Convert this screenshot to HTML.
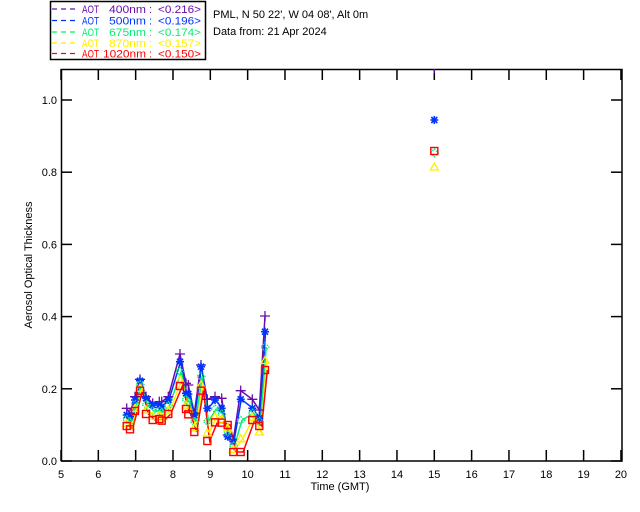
<!DOCTYPE html>
<html><head><meta charset="utf-8"><style>
html,body{margin:0;padding:0;background:#fff;}
svg{display:block;}
text{font-family:"Liberation Sans",sans-serif;font-size:11px;}
</style></head><body>
<svg id="s" width="640" height="512" xmlns="http://www.w3.org/2000/svg">
<rect width="640" height="512" fill="#fff"/>
<rect x="50.5" y="1.5" width="155" height="58" fill="none" stroke="#000" stroke-width="1.5"/>
<g id="leg" font-size="11"></g>
<g font-size="11">
<text x="213" y="18" fill="#000">PML, N 50 22', W 04 08', Alt 0m</text>
<text x="213" y="35" fill="#000">Data from: 21 Apr 2024</text>
</g>
<rect x="61.5" y="69.5" width="560.5" height="391.5" fill="none" stroke="#000" stroke-width="1.5"/>
<g id="ax" stroke="#000" stroke-width="1.5"></g>
<g id="lab" font-size="11" fill="#000"></g>
<text x="340" y="490" text-anchor="middle" font-size="11">Time (GMT)</text>
<text transform="translate(32,265) rotate(-90)" text-anchor="middle" font-size="10.5">Aerosol Optical Thickness</text>
<g id="d"></g>
</svg>
<script>
var NS="http://www.w3.org/2000/svg";
function el(p,t,a){var e=document.createElementNS(NS,t);for(var k in a)e.setAttribute(k,a[k]);p.appendChild(e);return e;}
var ax=document.getElementById('ax'),lab=document.getElementById('lab'),d=document.getElementById('d'),leg=document.getElementById('leg');
var L=[['#6a0dad','400nm','0.216'],['#0033ff','500nm','0.196'],['#00ee77','675nm','0.174'],['#ffee00','870nm','0.157'],['#ff0000','1020nm','0.150']];
var LY=[9,20.5,32,43,53.5];
L.forEach(function(l,i){var y=LY[i];
 el(leg,'path',{d:'M52 '+y+'h5M61 '+y+'h5M70 '+y+'h5',stroke:l[0],'stroke-width':1.2});
 var t=el(leg,'text',{x:82,y:y+4,fill:l[0],textLength:17,lengthAdjust:'spacingAndGlyphs'});t.textContent='AOT';
 var w=l[1].length==6?43:37;
 t=el(leg,'text',{x:146-w,y:y+4,fill:l[0],textLength:w,lengthAdjust:'spacingAndGlyphs'});t.textContent=l[1];
 t=el(leg,'text',{x:149,y:y+4,fill:l[0]});t.textContent=':';
 t=el(leg,'text',{x:158,y:y+4,fill:l[0],textLength:43,lengthAdjust:'spacingAndGlyphs'});t.textContent='<'+l[2]+'>';
});
function X(h){return 61+(h-5)*37.33;}
function Y(v){return 461-v*361;}
for(var h=5;h<=20;h++){var x=X(h);
 el(ax,'line',{x1:x,y1:461,x2:x,y2:450});el(ax,'line',{x1:x,y1:69,x2:x,y2:80});
 var t=el(lab,'text',{x:x,y:478,'text-anchor':'middle'});t.textContent=h;}
for(var i=0;i<=5;i++){var y=Y(i*0.2);
 el(ax,'line',{x1:61,y1:y,x2:72,y2:y});el(ax,'line',{x1:622,y1:y,x2:611,y2:y});
 var t=el(lab,'text',{x:57,y:y+4,'text-anchor':'end'});t.textContent=(i*0.2).toFixed(1);}
var xs=[126.7,130,135,140,146,152.7,159.3,161.7,168.3,180,186,188.3,194.3,201,207.3,215,221.7,227.7,233.3,240.7,252.3,259.3,265];
var R=[378,388,333,272,342,360,357,362,342,258,327,343,396,272,423,367,368,375,456,456,360,378,210];
var B=[345,350,300,242,295,315,315,320,300,185,280,282,345,200,325,300,325,410,425,298,325,355,95];
var P=[325,340,290,238,290,310,305,305,290,162,250,255,340,195,298,290,295,405,420,272,298,330,48];
function ys(a){return a.map(function(z){return 300+z/3;});}
var yr=ys(R),yb=ys(B),yp=ys(P);
var yg=yb.map(function(v,i){return v+0.4*(yr[i]-v);});
var yy=yb.map(function(v,i){return v+0.75*(yr[i]-v);});
yy[21]=yr[21]+6;
var series=[[yp,'#6a0dad','plus'],[yb,'#0033ff','star'],[yg,'#00ee77','dia'],[yy,'#ffee00','tri'],[yr,'#ff0000','sq']];
function mark(t,x,y,c){
 if(t=='plus'){el(d,'path',{d:'M'+(x-5)+' '+y+'h10M'+x+' '+(y-5)+'v10',stroke:c,'stroke-width':1.3,fill:'none'});}
 else if(t=='star'){el(d,'path',{d:'M'+(x-4)+' '+y+'h8M'+x+' '+(y-4)+'v8M'+(x-3)+' '+(y-3)+'l6 6M'+(x+3)+' '+(y-3)+'l-6 6',stroke:c,'stroke-width':1.6,fill:'none'});}
 else if(t=='dia'){el(d,'path',{d:'M'+x+' '+(y-4)+'l4 4l-4 4l-4 -4z',stroke:c,'stroke-width':1.3,fill:'none','stroke-dasharray':'1.5 1'});}
 else if(t=='tri'){el(d,'path',{d:'M'+x+' '+(y-4)+'l4 7h-8z',stroke:c,'stroke-width':1.3,fill:'none'});}
 else {el(d,'rect',{x:x-3.5,y:y-3.5,width:7,height:7,stroke:c,'stroke-width':1.4,fill:'none'});}
}
series.forEach(function(s,k){
 var off=k*0.6;
 el(d,'polyline',{points:xs.map(function(x,i){return (x+off)+','+s[0][i];}).join(' '),stroke:s[1],'stroke-width':1.5,fill:'none'});
});
series.forEach(function(s){xs.forEach(function(x,i){mark(s[2],x,s[0][i],s[1]);});});
var x15=X(15);
el(d,'path',{d:'M'+x15+' 69v4',stroke:'#6a0dad','stroke-width':1.3});
mark('star',x15,120,'#0033ff');
mark('dia',x15,153,'#00ee77');
mark('sq',x15,151,'#ff0000');
mark('tri',x15,167,'#ffee00');
</script>
</body></html>
